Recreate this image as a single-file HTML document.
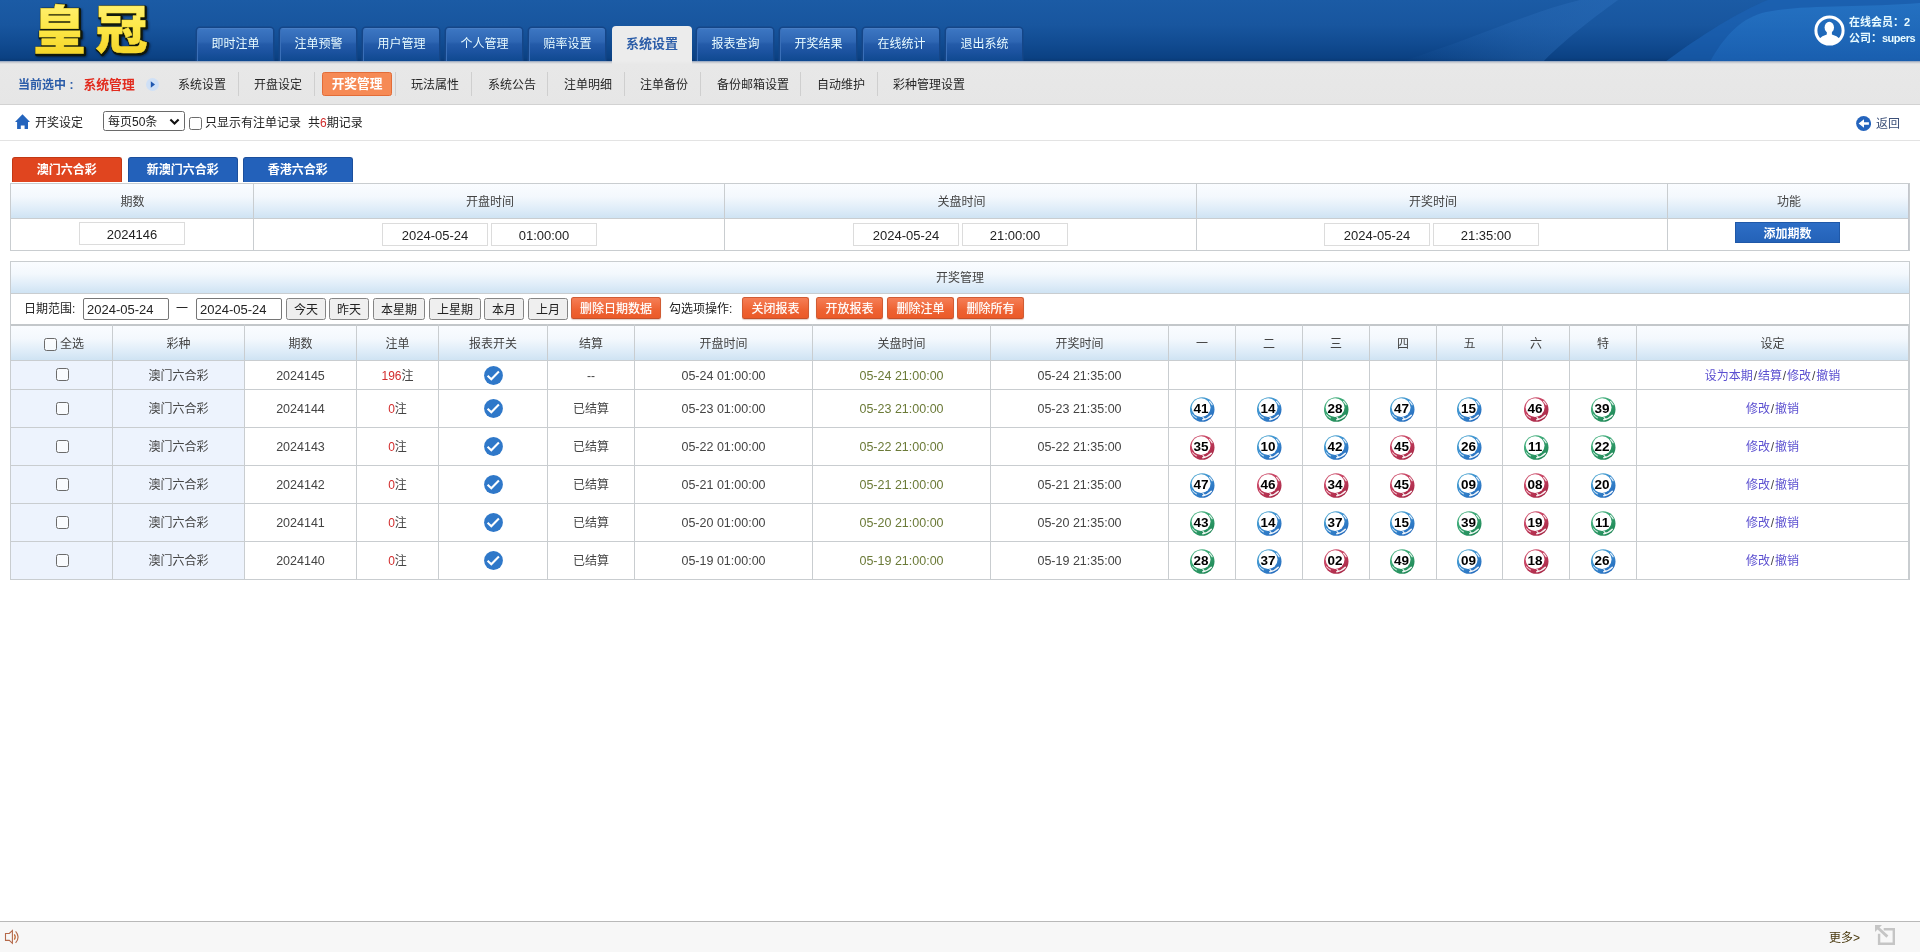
<!DOCTYPE html>
<html lang="zh-CN">
<head>
<meta charset="utf-8">
<title>开奖管理</title>
<style>
*{box-sizing:border-box;margin:0;padding:0}
html,body{width:1920px;height:952px;overflow:hidden;background:#fff}
body{font-family:"Liberation Sans","Noto Sans CJK SC",sans-serif;font-size:12px;color:#444;position:relative}
#pg{position:absolute;left:0;top:0;width:1920px;height:952px;overflow:hidden;will-change:transform}
.abs{position:absolute}
/* ---------- header ---------- */
#hd{position:absolute;left:0;top:0;width:1920px;height:61px;background:#1b559f;overflow:hidden}
#hd svg.bg{position:absolute;left:0;top:0}
#logo{position:absolute;left:0;top:0;filter:drop-shadow(1.2px 1.6px 1.2px rgba(0,10,30,.55))}
.nt{position:absolute;top:28px;width:76px;height:33px;border-radius:3px 3px 0 0;background:linear-gradient(#3c76c2 0,#2e66b3 40%,#245ba9 47%,#1b529f 72%,#0f4990 100%);border-left:1px solid #396fb8;border-top:1px solid #487ec5;color:#e8fbff;text-align:center;line-height:30px;font-size:12px;box-shadow:0 0 0 1.5px #154688}
.nt.on{top:26px;width:80px;height:37px;background:#ececec;border:0;color:#2c5da8;font-weight:bold;font-size:13px;line-height:36px;box-shadow:none;border-radius:4px 4px 0 0}
#usr{position:absolute;left:1849px;top:14px;color:#e8fbff;font-weight:bold;font-size:11px;line-height:16px;white-space:nowrap}
/* ---------- subnav ---------- */
#sn{position:absolute;left:0;top:61px;width:1920px;height:44px;background:linear-gradient(#8da1bf 0,#c9ccd2 1.5px,#e8e8e8 3px,#e6e6e6 100%);border-bottom:1px solid #d2d2d2}
#sn .t{position:absolute;top:16px;line-height:16px;color:#262626;white-space:nowrap}
#sn .sep{position:absolute;top:11px;width:1px;height:24px;background:#cfcfcf}
#sn .pill{position:absolute;left:322px;top:11px;width:70px;height:24px;border:1px solid #e26c38;border-radius:2.5px;background:#f68a55;color:#fff;font-weight:bold;font-size:12.7px;text-align:center;line-height:23px}
/* ---------- toolbar ---------- */
#tb{position:absolute;left:0;top:105px;width:1920px;height:36px;border-bottom:1px solid #e3e3e3}
#tb .t{position:absolute;top:10px;line-height:16px;color:#222;white-space:nowrap}
.sel{position:absolute;left:103px;top:6px;width:82px;height:20px;border:1px solid #6a6a6a;border-radius:2.5px;background:#fff;color:#1a1a1a;line-height:21px;padding-left:4px}
.cb{position:absolute;width:13px;height:13px;border:1px solid #6b6b6b;border-radius:2.5px;background:rgba(255,255,255,.65)}
/* ---------- lottery tabs ---------- */
.lt{position:absolute;top:156.5px;width:110.5px;height:25.6px;border-radius:3px 3px 0 0;color:#fff;font-weight:bold;text-align:center;line-height:25px;border:1px solid #1c4f9c;border-bottom:0;background:#2361ba}
.lt.on{background:#e0451f;border-color:#c23814}
/* ---------- tables ---------- */
.th{background:linear-gradient(#fafcff 0,#f3f8fd 38%,#deecf8 75%,#cfe3f3 100%);color:#444;text-align:center}
.bx{position:absolute;border:1px solid #c9cdd0}
.vl{position:absolute;width:1px;background:#c9cdd0}
.hl{position:absolute;height:1px;background:#c9cdd0}
.c{position:absolute;text-align:center;white-space:nowrap;line-height:16px}
.inp{position:absolute;height:23px;border:1px solid #dcdcdc;background:#fff;color:#222;text-align:center;line-height:24px;font-size:13px}
.di{position:absolute;top:298px;width:86px;height:22px;border:1px solid #767676;border-radius:2px;background:#fff;color:#222;line-height:22px;padding-left:3px;font-size:13px}
.gb{position:absolute;top:298px;height:22px;border:1px solid #858585;border-radius:2.5px;background:#efefef;color:#222;text-align:center;line-height:22px}
.ob{position:absolute;top:297px;height:22px;border:1px solid #d05c34;border-bottom-color:#c5502a;border-radius:2.5px;background:linear-gradient(#f57e56,#ee6232 60%,#eb5a28);color:#fff;text-align:center;line-height:23px;text-shadow:0 0 1px rgba(255,255,255,.7);box-shadow:0 1px 1px rgba(120,40,10,.25)}
.bb{position:absolute;left:1735px;top:222px;width:105px;height:21px;background:linear-gradient(#2d6ec6,#2462b8);border:1px solid #1f58a8;color:#fff;font-weight:bold;text-align:center;line-height:22px}
#t3 .r{position:absolute;left:0;width:1899px}
.n{font-size:12.5px}
.g{color:#6b7a38}
.rd{color:#d22c2c}
.lk{color:#5b4fd0}
.sl{margin:0 .9px}
.ball{position:absolute;width:25px;height:25px}
.ball svg{position:absolute;left:0;top:0}
.ball b{position:absolute;left:-1.3px;top:4.3px;width:25px;text-align:center;font:bold 13.5px/16px "Liberation Sans",sans-serif;color:#000}
.ck{position:absolute;width:19px;height:19px}
/* ---------- footer ---------- */
#ft{position:absolute;left:0;top:921px;width:1920px;height:31px;background:#f7f7f7;border-top:1px solid #b9b9b9}
</style>
</head>
<body>
<div id="pg">
<svg width="0" height="0" style="position:absolute">
<defs>
<linearGradient id="gB" x1="0.1" y1="0" x2="0.85" y2="1"><stop offset="0" stop-color="#58afd2"/><stop offset=".45" stop-color="#3a8dd0"/><stop offset="1" stop-color="#2468bb"/></linearGradient>
<linearGradient id="gR" x1="0.1" y1="0" x2="0.85" y2="1"><stop offset="0" stop-color="#d4607a"/><stop offset=".45" stop-color="#c43e5e"/><stop offset="1" stop-color="#a32543"/></linearGradient>
<linearGradient id="gG" x1="0.1" y1="0" x2="0.85" y2="1"><stop offset="0" stop-color="#5bbd90"/><stop offset=".45" stop-color="#35a370"/><stop offset="1" stop-color="#1c8352"/></linearGradient>
<g id="bsh">
<circle cx="11.1" cy="10.6" r="9.45" fill="#fff"/>
<g fill="none" stroke="#fff" stroke-linecap="round">
<path d="M2.5 17.9 Q4.3 19.9 6.5 20.9" stroke-width="1" opacity=".9"/>
<path d="M12.8 22.7 Q18 22 21.3 18.3" stroke-width="1.5" opacity=".92"/>
<path d="M13 20.3 L14.2 21.8" stroke-width="1.3" opacity=".85"/>
<path d="M19.6 4.5 Q21.3 6 22.1 7.8" stroke-width="1.2" opacity=".85"/>
</g>
</g>
<symbol id="bB" viewBox="0 0 25 25"><circle cx="12.2" cy="12.5" r="12.3" fill="url(#gB)"/><use href="#bsh"/></symbol>
<symbol id="bR" viewBox="0 0 25 25"><circle cx="12.2" cy="12.5" r="12.3" fill="url(#gR)"/><use href="#bsh"/></symbol>
<symbol id="bG" viewBox="0 0 25 25"><circle cx="12.2" cy="12.5" r="12.3" fill="url(#gG)"/><use href="#bsh"/></symbol>
<symbol id="ck" viewBox="0 0 19 19"><circle cx="9.5" cy="9.5" r="9.4" fill="#2f78c9"/><path d="M3.6 9.7 L7.3 13.2 L14.9 5.6" fill="none" stroke="#fff" stroke-width="2.1"/></symbol>
</defs>
</svg>

<!-- HEADER -->
<div id="hd">
<svg class="bg" width="1920" height="62" viewBox="0 0 1920 62">
<defs>
<linearGradient id="hg" x1="0" y1="0" x2="0" y2="1"><stop offset="0" stop-color="#1b5ba5"/><stop offset=".4" stop-color="#18569f"/><stop offset=".7" stop-color="#114b91"/><stop offset=".93" stop-color="#0b4183"/><stop offset="1" stop-color="#083873"/></linearGradient>
<linearGradient id="ha" x1="0" y1="0" x2="1" y2="0"><stop offset="0" stop-color="#2d70bd" stop-opacity="0"/><stop offset=".55" stop-color="#2d70bd" stop-opacity=".32"/><stop offset="1" stop-color="#2d70bd" stop-opacity=".45"/></linearGradient>
<linearGradient id="hc" x1="0" y1="0" x2="0" y2="1"><stop offset="0" stop-color="#2a7ccc" stop-opacity=".6"/><stop offset="1" stop-color="#1f6abf" stop-opacity=".45"/></linearGradient>
</defs>
<rect width="1920" height="62" fill="url(#hg)"/>
<path d="M1400 62 C1470 40 1530 12 1580 0 L1618 0 C1590 20 1560 44 1543 62Z" fill="url(#ha)"/>
<path d="M1665 62 C1700 36 1738 12 1768 0 L1920 0 L1920 62Z" fill="#1d64b8" opacity=".6"/>
<path d="M1710 62 C1722 40 1738 20 1762 13 C1800 4 1860 8 1920 3 L1920 62Z" fill="url(#hc)"/>
</svg>
<svg id="logo" width="190" height="62" viewBox="0 0 190 62">
<defs><linearGradient id="lg" x1="0" y1="0" x2="0" y2="1"><stop offset="0" stop-color="#fff58a"/><stop offset=".5" stop-color="#fde84a"/><stop offset="1" stop-color="#f2cf1c"/></linearGradient></defs>
<text x="33.5" y="49" font-family="'Noto Sans CJK SC',sans-serif" font-weight="900" font-size="52" letter-spacing="10" fill="#10180c" stroke="#10180c" stroke-width="3.2" stroke-linejoin="round" transform="translate(1,1.3)">皇冠</text>
<text x="33.5" y="49" font-family="'Noto Sans CJK SC',sans-serif" font-weight="900" font-size="52" letter-spacing="10" fill="url(#lg)" stroke="#f7de3a" stroke-width="0.4" stroke-linejoin="round">皇冠</text>
</svg>
<div class="nt" style="left:197px">即时注单</div>
<div class="nt" style="left:280px">注单预警</div>
<div class="nt" style="left:363px">用户管理</div>
<div class="nt" style="left:446px">个人管理</div>
<div class="nt" style="left:529px">赔率设置</div>
<div class="nt on" style="left:612px">系统设置</div>
<div class="nt" style="left:697px">报表查询</div>
<div class="nt" style="left:780px">开奖结果</div>
<div class="nt" style="left:863px">在线统计</div>
<div class="nt" style="left:946px">退出系统</div>
<svg class="abs" style="left:1814px;top:15px" width="31" height="31" viewBox="0 0 31 31"><defs><clipPath id="uc"><circle cx="15.5" cy="15.5" r="13"/></clipPath></defs><circle cx="15.5" cy="15.5" r="13.6" fill="none" stroke="#fff" stroke-width="3"/><g clip-path="url(#uc)" fill="#fff"><ellipse cx="15.3" cy="12.4" rx="4.7" ry="5.6"/><path d="M12.8 16 L12.8 19.6 Q8 21 5 24 L5 31 L26 31 L26 24 Q23 21 17.9 19.6 L17.9 16Z"/></g></svg>
<div id="usr">在线会员：2<br>公司：<span style="letter-spacing:-.5px">supers</span></div>
</div>

<!-- SUBNAV -->
<div id="sn">
<div class="abs" style="left:612px;top:0;width:80px;height:3px;background:linear-gradient(#ececec,#e8e8e8)"></div>
<div class="t" style="left:18px;color:#2b5ca9;font-weight:bold">当前选中<span style="margin-left:3.5px">:</span></div>
<div class="t" style="left:83.5px;color:#e22b1e;font-weight:bold;font-size:12.8px">系统管理</div>
<svg class="abs" style="left:145px;top:16px" width="15" height="15" viewBox="0 0 15 15"><circle cx="7.5" cy="7.5" r="6.5" fill="#cfe0f6"/><path d="M5.8 4.3 L10 7.5 L5.8 10.7Z" fill="#1f57b0"/></svg>
<div class="t" style="left:178px">系统设置</div><div class="sep" style="left:238px"></div>
<div class="t" style="left:254px">开盘设定</div><div class="sep" style="left:314px"></div>
<div class="pill">开奖管理</div><div class="sep" style="left:395px"></div>
<div class="t" style="left:411px">玩法属性</div><div class="sep" style="left:471px"></div>
<div class="t" style="left:488px">系统公告</div><div class="sep" style="left:547px"></div>
<div class="t" style="left:564px">注单明细</div><div class="sep" style="left:624px"></div>
<div class="t" style="left:640px">注单备份</div><div class="sep" style="left:700px"></div>
<div class="t" style="left:717px">备份邮箱设置</div><div class="sep" style="left:800px"></div>
<div class="t" style="left:817px">自动维护</div><div class="sep" style="left:877px"></div>
<div class="t" style="left:893px">彩种管理设置</div>
</div>

<!-- TOOLBAR -->
<div id="tb">
<svg class="abs" style="left:15px;top:8.6px" width="15" height="15.5" viewBox="0 0 15 15.5"><path d="M7.5 0.2 L15 8 L13 8 L13 15.3 L9.6 15.3 L9.6 11.5 L5.8 11.5 L5.8 15.3 L2.1 15.3 L2.1 8 L0 8Z" fill="#2464bd"/></svg>
<div class="t" style="left:35px">开奖设定</div>
<div class="sel">每页50条<svg class="abs" style="left:65px;top:6px" width="11" height="8" viewBox="0 0 11 8"><path d="M1.4 1.5 L5.5 5.6 L9.6 1.5" fill="none" stroke="#111" stroke-width="2.1"/></svg></div>
<div class="cb" style="left:189px;top:12px"></div>
<div class="t" style="left:205px">只显示有注单记录</div>
<div class="t" style="left:308px">共<span class="rd">6</span>期记录</div>
<svg class="abs" style="left:1856px;top:10.9px" width="15" height="15" viewBox="0 0 15 15"><circle cx="7.6" cy="7.5" r="7.45" fill="#2464bd"/><path d="M2.6 7.5 L8 3.2 L8 6.35 L12.9 6.35 L12.9 8.65 L8 8.65 L8 11.8Z" fill="#fff"/></svg>
<div class="t" style="left:1876px;top:11px;color:#3b4f78">返回</div>
</div>

<!-- LOTTERY TABS -->
<div class="lt on" style="left:11.5px">澳门六合彩</div>
<div class="lt" style="left:127.5px">新澳门六合彩</div>
<div class="lt" style="left:242.5px">香港六合彩</div>

<!-- TABLE 1 -->
<div id="t1" class="bx" style="left:10px;top:183px;width:1900px;height:68px">
<div class="th abs" style="left:0;top:0;width:1898px;height:34px"></div>
<div class="hl" style="left:0;top:34px;width:1898px"></div>
<div class="vl" style="left:242px;top:0;height:66px"></div>
<div class="vl" style="left:713px;top:0;height:66px"></div>
<div class="vl" style="left:1185px;top:0;height:66px"></div>
<div class="vl" style="left:1656px;top:0;height:66px"></div>
<div class="c" style="left:0;width:243px;top:10px">期数</div>
<div class="c" style="left:244px;width:470px;top:10px">开盘时间</div>
<div class="c" style="left:715px;width:471px;top:10px">关盘时间</div>
<div class="c" style="left:1187px;width:470px;top:10px">开奖时间</div>
<div class="c" style="left:1658px;width:240px;top:10px">功能</div>
<div class="vl" style="left:1897px;top:0;height:66px;background:#c3c6cc"></div>
</div>
<div class="inp" style="left:79px;top:222px;width:106px">2024146</div>
<div class="inp" style="left:382px;top:223px;width:106px">2024-05-24</div><div class="inp" style="left:491px;top:223px;width:106px">01:00:00</div>
<div class="inp" style="left:853px;top:223px;width:106px">2024-05-24</div><div class="inp" style="left:962px;top:223px;width:106px">21:00:00</div>
<div class="inp" style="left:1324px;top:223px;width:106px">2024-05-24</div><div class="inp" style="left:1433px;top:223px;width:106px">21:35:00</div>
<div class="bb">添加期数</div>

<!-- TABLE 2 -->
<div id="t2" class="bx" style="left:10px;top:261px;width:1900px;height:65px;border-bottom:0">
<div class="th abs" style="left:0;top:0;width:1898px;height:31px"></div>
<div class="hl" style="left:0;top:31px;width:1898px"></div>
<div class="c" style="left:0;width:1898px;top:8px">开奖管理</div>
</div>
<div class="c" style="left:24px;top:301px;color:#222">日期范围:</div>
<div class="di" style="left:83px">2024-05-24</div>
<div class="c" style="left:176px;top:301px;color:#222">一</div>
<div class="di" style="left:196px">2024-05-24</div>
<div class="gb" style="left:286px;width:40px">今天</div>
<div class="gb" style="left:329px;width:40px">昨天</div>
<div class="gb" style="left:373px;width:52px">本星期</div>
<div class="gb" style="left:429px;width:52px">上星期</div>
<div class="gb" style="left:484px;width:40px">本月</div>
<div class="gb" style="left:528px;width:40px">上月</div>
<div class="ob" style="left:571px;width:90px">删除日期数据</div>
<div class="c" style="left:669px;top:301px;color:#222">勾选项操作:</div>
<div class="ob" style="left:742px;width:67px">关闭报表</div>
<div class="ob" style="left:816px;width:67px">开放报表</div>
<div class="ob" style="left:887px;width:67px">删除注单</div>
<div class="ob" style="left:957px;width:67px">删除所有</div>

<!-- TABLE 3 -->
<div id="t3" class="abs" style="left:10px;top:324px;width:1900px;height:256px">
<div class="th abs" style="left:1px;top:2px;width:1897px;height:34px"></div>
<div class="abs" style="left:1px;top:37px;width:233px;height:218px;background:#edf3fd"></div>
<div class="abs" style="left:0;top:0;width:1899px;height:2px;background:#c3c7ca"></div>
<div class="hl" style="left:0;top:36px;width:1899px"></div>
<div class="hl" style="left:0;top:65px;width:1899px"></div>
<div class="hl" style="left:0;top:103px;width:1899px"></div>
<div class="hl" style="left:0;top:141px;width:1899px"></div>
<div class="hl" style="left:0;top:179px;width:1899px"></div>
<div class="hl" style="left:0;top:217px;width:1899px"></div>
<div class="hl" style="left:0;top:255px;width:1899px"></div>
<div class="vl" style="left:0px;top:0;height:256px;width:1px"></div>
<div class="vl" style="left:102px;top:0;height:256px;width:1px"></div>
<div class="vl" style="left:234px;top:0;height:256px;width:1px"></div>
<div class="vl" style="left:346px;top:0;height:256px;width:1px"></div>
<div class="vl" style="left:428px;top:0;height:256px;width:1px"></div>
<div class="vl" style="left:537px;top:0;height:256px;width:1px"></div>
<div class="vl" style="left:624px;top:0;height:256px;width:1px"></div>
<div class="vl" style="left:802px;top:0;height:256px;width:1px"></div>
<div class="vl" style="left:980px;top:0;height:256px;width:1px"></div>
<div class="vl" style="left:1158px;top:0;height:256px;width:1px"></div>
<div class="vl" style="left:1225px;top:0;height:256px;width:1px"></div>
<div class="vl" style="left:1292px;top:0;height:256px;width:1px"></div>
<div class="vl" style="left:1359px;top:0;height:256px;width:1px"></div>
<div class="vl" style="left:1426px;top:0;height:256px;width:1px"></div>
<div class="vl" style="left:1492px;top:0;height:256px;width:1px"></div>
<div class="vl" style="left:1559px;top:0;height:256px;width:1px"></div>
<div class="vl" style="left:1626px;top:0;height:256px;width:1px"></div>
<div class="vl" style="left:1898px;top:0;height:256px;width:2px"></div>
<div class="cb" style="left:34px;top:14px"></div>
<div class="c" style="left:50px;top:12px">全选</div>
<div class="c " style="left:103px;width:131px;top:12px">彩种</div>
<div class="c " style="left:235px;width:111px;top:12px">期数</div>
<div class="c " style="left:347px;width:81px;top:12px">注单</div>
<div class="c " style="left:429px;width:108px;top:12px">报表开关</div>
<div class="c " style="left:538px;width:86px;top:12px">结算</div>
<div class="c " style="left:625px;width:177px;top:12px">开盘时间</div>
<div class="c " style="left:803px;width:177px;top:12px">关盘时间</div>
<div class="c " style="left:981px;width:177px;top:12px">开奖时间</div>
<div class="c " style="left:1159px;width:66px;top:12px">一</div>
<div class="c " style="left:1226px;width:66px;top:12px">二</div>
<div class="c " style="left:1293px;width:66px;top:12px">三</div>
<div class="c " style="left:1360px;width:66px;top:12px">四</div>
<div class="c " style="left:1427px;width:65px;top:12px">五</div>
<div class="c " style="left:1493px;width:66px;top:12px">六</div>
<div class="c " style="left:1560px;width:66px;top:12px">特</div>
<div class="c " style="left:1627px;width:271px;top:12px">设定</div>
<div class="cb" style="left:46px;top:44px"></div>
<div class="c tx" style="left:103px;width:131px;top:44px">澳门六合彩</div>
<div class="c tx n" style="left:235px;width:111px;top:44px">2024145</div>
<div class="c tx" style="left:347px;width:81px;top:44px"><span class="rd">196</span>注</div>
<svg class="ck" style="left:473.5px;top:41.5px" width="19" height="19"><use href="#ck"/></svg>
<div class="c tx" style="left:538px;width:86px;top:44px">--</div>
<div class="c tx n" style="left:625px;width:177px;top:44px">05-24 01:00:00</div>
<div class="c tx n g" style="left:803px;width:177px;top:44px">05-24 21:00:00</div>
<div class="c tx n" style="left:981px;width:177px;top:44px">05-24 21:35:00</div>
<div class="c tx" style="left:1627px;width:271px;top:44px"><span class="lk">设为本期</span><span class="sl">/</span><span class="lk">结算</span><span class="sl">/</span><span class="lk">修改</span><span class="sl">/</span><span class="lk">撤销</span></div>
<div class="cb" style="left:46px;top:78px"></div>
<div class="c tx" style="left:103px;width:131px;top:77px">澳门六合彩</div>
<div class="c tx n" style="left:235px;width:111px;top:77px">2024144</div>
<div class="c tx" style="left:347px;width:81px;top:77px"><span class="rd">0</span>注</div>
<svg class="ck" style="left:473.5px;top:74.5px" width="19" height="19"><use href="#ck"/></svg>
<div class="c tx" style="left:538px;width:86px;top:77px">已结算</div>
<div class="c tx n" style="left:625px;width:177px;top:77px">05-23 01:00:00</div>
<div class="c tx n g" style="left:803px;width:177px;top:77px">05-23 21:00:00</div>
<div class="c tx n" style="left:981px;width:177px;top:77px">05-23 21:35:00</div>
<div class="ball" style="left:1179.9px;top:72.9px"><svg width="25" height="25"><use href="#bB"/></svg><b>41</b></div>
<div class="ball" style="left:1246.9px;top:72.9px"><svg width="25" height="25"><use href="#bB"/></svg><b>14</b></div>
<div class="ball" style="left:1313.9px;top:72.9px"><svg width="25" height="25"><use href="#bG"/></svg><b>28</b></div>
<div class="ball" style="left:1380.3px;top:72.9px"><svg width="25" height="25"><use href="#bB"/></svg><b>47</b></div>
<div class="ball" style="left:1447.4px;top:72.9px"><svg width="25" height="25"><use href="#bB"/></svg><b>15</b></div>
<div class="ball" style="left:1513.9px;top:72.9px"><svg width="25" height="25"><use href="#bR"/></svg><b>46</b></div>
<div class="ball" style="left:1580.9px;top:72.9px"><svg width="25" height="25"><use href="#bG"/></svg><b>39</b></div>
<div class="c tx" style="left:1627px;width:271px;top:77px"><span class="lk">修改</span><span class="sl">/</span><span class="lk">撤销</span></div>
<div class="cb" style="left:46px;top:116px"></div>
<div class="c tx" style="left:103px;width:131px;top:115px">澳门六合彩</div>
<div class="c tx n" style="left:235px;width:111px;top:115px">2024143</div>
<div class="c tx" style="left:347px;width:81px;top:115px"><span class="rd">0</span>注</div>
<svg class="ck" style="left:473.5px;top:112.5px" width="19" height="19"><use href="#ck"/></svg>
<div class="c tx" style="left:538px;width:86px;top:115px">已结算</div>
<div class="c tx n" style="left:625px;width:177px;top:115px">05-22 01:00:00</div>
<div class="c tx n g" style="left:803px;width:177px;top:115px">05-22 21:00:00</div>
<div class="c tx n" style="left:981px;width:177px;top:115px">05-22 21:35:00</div>
<div class="ball" style="left:1179.9px;top:110.9px"><svg width="25" height="25"><use href="#bR"/></svg><b>35</b></div>
<div class="ball" style="left:1246.9px;top:110.9px"><svg width="25" height="25"><use href="#bB"/></svg><b>10</b></div>
<div class="ball" style="left:1313.9px;top:110.9px"><svg width="25" height="25"><use href="#bB"/></svg><b>42</b></div>
<div class="ball" style="left:1380.3px;top:110.9px"><svg width="25" height="25"><use href="#bR"/></svg><b>45</b></div>
<div class="ball" style="left:1447.4px;top:110.9px"><svg width="25" height="25"><use href="#bB"/></svg><b>26</b></div>
<div class="ball" style="left:1513.9px;top:110.9px"><svg width="25" height="25"><use href="#bG"/></svg><b>11</b></div>
<div class="ball" style="left:1580.9px;top:110.9px"><svg width="25" height="25"><use href="#bG"/></svg><b>22</b></div>
<div class="c tx" style="left:1627px;width:271px;top:115px"><span class="lk">修改</span><span class="sl">/</span><span class="lk">撤销</span></div>
<div class="cb" style="left:46px;top:154px"></div>
<div class="c tx" style="left:103px;width:131px;top:153px">澳门六合彩</div>
<div class="c tx n" style="left:235px;width:111px;top:153px">2024142</div>
<div class="c tx" style="left:347px;width:81px;top:153px"><span class="rd">0</span>注</div>
<svg class="ck" style="left:473.5px;top:150.5px" width="19" height="19"><use href="#ck"/></svg>
<div class="c tx" style="left:538px;width:86px;top:153px">已结算</div>
<div class="c tx n" style="left:625px;width:177px;top:153px">05-21 01:00:00</div>
<div class="c tx n g" style="left:803px;width:177px;top:153px">05-21 21:00:00</div>
<div class="c tx n" style="left:981px;width:177px;top:153px">05-21 21:35:00</div>
<div class="ball" style="left:1179.9px;top:148.9px"><svg width="25" height="25"><use href="#bB"/></svg><b>47</b></div>
<div class="ball" style="left:1246.9px;top:148.9px"><svg width="25" height="25"><use href="#bR"/></svg><b>46</b></div>
<div class="ball" style="left:1313.9px;top:148.9px"><svg width="25" height="25"><use href="#bR"/></svg><b>34</b></div>
<div class="ball" style="left:1380.3px;top:148.9px"><svg width="25" height="25"><use href="#bR"/></svg><b>45</b></div>
<div class="ball" style="left:1447.4px;top:148.9px"><svg width="25" height="25"><use href="#bB"/></svg><b>09</b></div>
<div class="ball" style="left:1513.9px;top:148.9px"><svg width="25" height="25"><use href="#bR"/></svg><b>08</b></div>
<div class="ball" style="left:1580.9px;top:148.9px"><svg width="25" height="25"><use href="#bB"/></svg><b>20</b></div>
<div class="c tx" style="left:1627px;width:271px;top:153px"><span class="lk">修改</span><span class="sl">/</span><span class="lk">撤销</span></div>
<div class="cb" style="left:46px;top:192px"></div>
<div class="c tx" style="left:103px;width:131px;top:191px">澳门六合彩</div>
<div class="c tx n" style="left:235px;width:111px;top:191px">2024141</div>
<div class="c tx" style="left:347px;width:81px;top:191px"><span class="rd">0</span>注</div>
<svg class="ck" style="left:473.5px;top:188.5px" width="19" height="19"><use href="#ck"/></svg>
<div class="c tx" style="left:538px;width:86px;top:191px">已结算</div>
<div class="c tx n" style="left:625px;width:177px;top:191px">05-20 01:00:00</div>
<div class="c tx n g" style="left:803px;width:177px;top:191px">05-20 21:00:00</div>
<div class="c tx n" style="left:981px;width:177px;top:191px">05-20 21:35:00</div>
<div class="ball" style="left:1179.9px;top:186.9px"><svg width="25" height="25"><use href="#bG"/></svg><b>43</b></div>
<div class="ball" style="left:1246.9px;top:186.9px"><svg width="25" height="25"><use href="#bB"/></svg><b>14</b></div>
<div class="ball" style="left:1313.9px;top:186.9px"><svg width="25" height="25"><use href="#bB"/></svg><b>37</b></div>
<div class="ball" style="left:1380.3px;top:186.9px"><svg width="25" height="25"><use href="#bB"/></svg><b>15</b></div>
<div class="ball" style="left:1447.4px;top:186.9px"><svg width="25" height="25"><use href="#bG"/></svg><b>39</b></div>
<div class="ball" style="left:1513.9px;top:186.9px"><svg width="25" height="25"><use href="#bR"/></svg><b>19</b></div>
<div class="ball" style="left:1580.9px;top:186.9px"><svg width="25" height="25"><use href="#bG"/></svg><b>11</b></div>
<div class="c tx" style="left:1627px;width:271px;top:191px"><span class="lk">修改</span><span class="sl">/</span><span class="lk">撤销</span></div>
<div class="cb" style="left:46px;top:230px"></div>
<div class="c tx" style="left:103px;width:131px;top:229px">澳门六合彩</div>
<div class="c tx n" style="left:235px;width:111px;top:229px">2024140</div>
<div class="c tx" style="left:347px;width:81px;top:229px"><span class="rd">0</span>注</div>
<svg class="ck" style="left:473.5px;top:226.5px" width="19" height="19"><use href="#ck"/></svg>
<div class="c tx" style="left:538px;width:86px;top:229px">已结算</div>
<div class="c tx n" style="left:625px;width:177px;top:229px">05-19 01:00:00</div>
<div class="c tx n g" style="left:803px;width:177px;top:229px">05-19 21:00:00</div>
<div class="c tx n" style="left:981px;width:177px;top:229px">05-19 21:35:00</div>
<div class="ball" style="left:1179.9px;top:224.9px"><svg width="25" height="25"><use href="#bG"/></svg><b>28</b></div>
<div class="ball" style="left:1246.9px;top:224.9px"><svg width="25" height="25"><use href="#bB"/></svg><b>37</b></div>
<div class="ball" style="left:1313.9px;top:224.9px"><svg width="25" height="25"><use href="#bR"/></svg><b>02</b></div>
<div class="ball" style="left:1380.3px;top:224.9px"><svg width="25" height="25"><use href="#bG"/></svg><b>49</b></div>
<div class="ball" style="left:1447.4px;top:224.9px"><svg width="25" height="25"><use href="#bB"/></svg><b>09</b></div>
<div class="ball" style="left:1513.9px;top:224.9px"><svg width="25" height="25"><use href="#bR"/></svg><b>18</b></div>
<div class="ball" style="left:1580.9px;top:224.9px"><svg width="25" height="25"><use href="#bB"/></svg><b>26</b></div>
<div class="c tx" style="left:1627px;width:271px;top:229px"><span class="lk">修改</span><span class="sl">/</span><span class="lk">撤销</span></div>
</div>

<!-- FOOTER -->
<div id="ft">
<svg class="abs" style="left:0;top:-2px" width="24" height="32" viewBox="0 0 24 32"><path d="M5.5 13.5 H9.3 L12.4 10.6 V23.3 L9.3 20.4 H5.5Z" fill="none" stroke="#b5694a" stroke-width="1.1" stroke-linejoin="miter"/><path d="M14.3 14.3 Q16.2 17 14.3 19.7" fill="none" stroke="#c46f3c" stroke-width="1.3"/><path d="M15.6 11.3 Q20.6 17 15.6 22.8" fill="none" stroke="#b5694a" stroke-width="1.1"/></svg>
<div class="c" style="left:1829px;top:8px;color:#4a3a10">更多&gt;</div>
<svg class="abs" style="left:1874px;top:2.2px" width="22" height="22" viewBox="0 0 22 22"><path d="M9.7 5.3 H19.8 V19.8 H5.1 V9.8" fill="none" stroke="#c5c5c5" stroke-width="2.4"/><path d="M1 1 L8 1 L1 8Z" fill="#c5c5c5"/><path d="M3.5 3.5 L13.4 12.6" stroke="#c5c5c5" stroke-width="2.8" fill="none"/></svg>
</div>
</div>
</body>
</html>
